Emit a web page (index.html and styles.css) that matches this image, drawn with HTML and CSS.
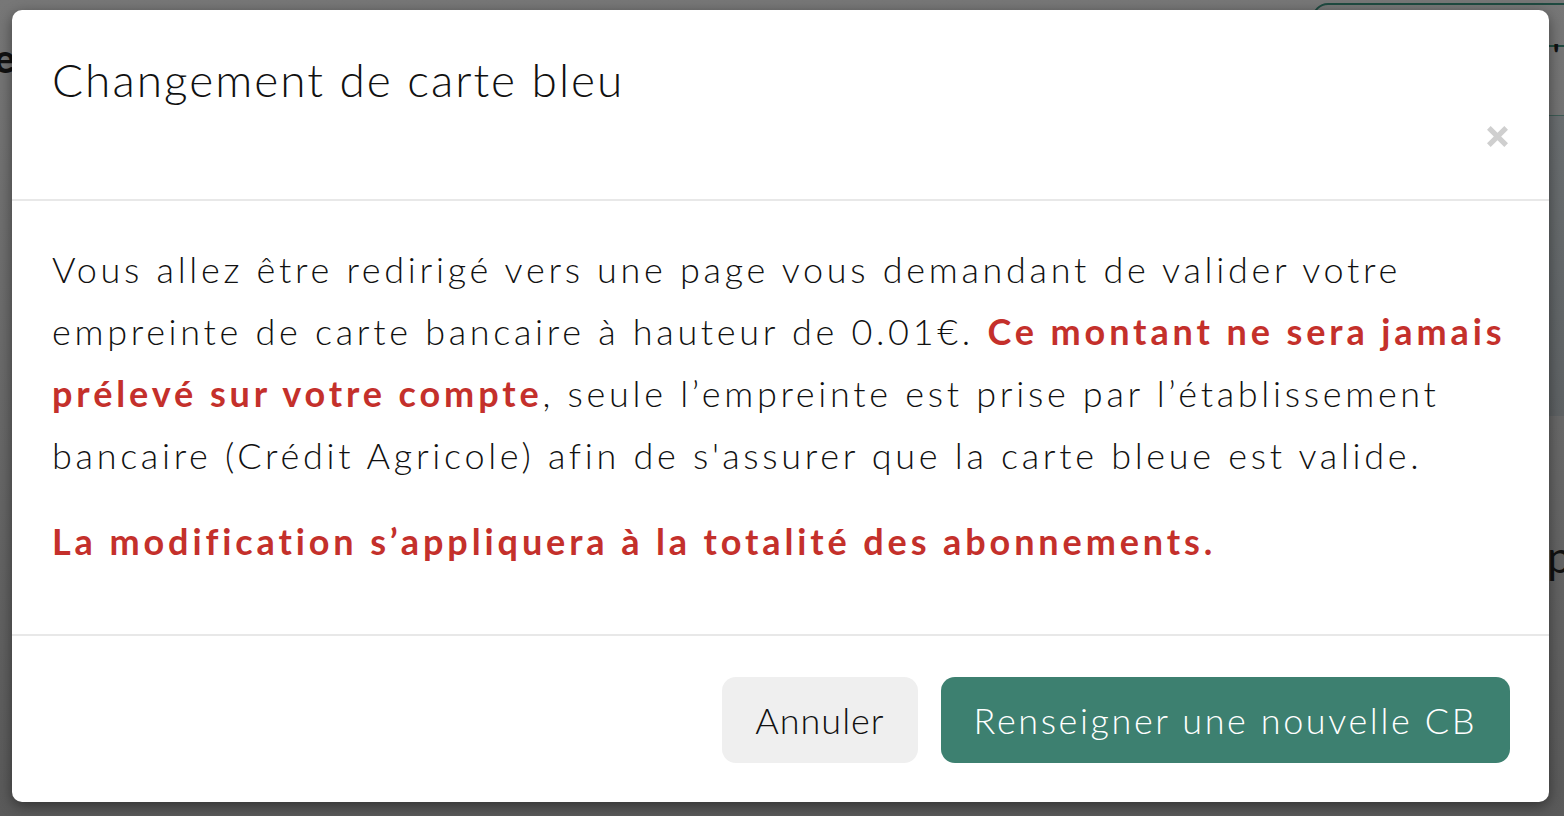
FILE: index.html
```html
<!DOCTYPE html>
<html lang="fr">
<head>
  <meta charset="UTF-8">
  <title>Changement de carte bleu</title>
  <link rel="stylesheet" href="styles.css">
</head>
<body>

  <!-- Page behind the backdrop -->
  <div class="page-behind">
    <span class="behind-letter">e</span>
    <span class="behind-btn"></span>
    <span class="behind-quote">'</span>
    <span class="behind-panel"></span>
    <span class="behind-p">p</span>
  </div>

  <!-- Modal -->
  <div class="modal">
    <header class="modal-header">
      <h4 class="modal-title">Changement de carte bleu</h4>
      <button class="close" type="button" aria-label="Fermer">
        <svg viewBox="0 0 20 20" width="21" height="21">
          <path d="M0 3.5 L3.5 0 L10 6.5 L16.5 0 L20 3.5 L13.5 10 L20 16.5 L16.5 20 L10 13.5 L3.5 20 L0 16.5 L6.5 10 Z" fill="#cfcfcf"/>
        </svg>
      </button>
    </header>

    <div class="modal-body">
      <p>Vous allez être redirigé vers une page vous demandant de valider votre empreinte de carte bancaire à hauteur de 0.01€. <strong class="warn">Ce montant ne sera jamais prélevé sur votre compte</strong>, seule l’empreinte est prise par l’établissement bancaire (Crédit Agricole) afin de s'assurer que la carte bleue est valide.</p>
      <p class="warn">La modification s’appliquera à la totalité des abonnements.</p>
    </div>

    <footer class="modal-footer">
      <button class="btn btn-light" type="button">Annuler</button>
      <button class="btn btn-green" type="button">Renseigner une nouvelle CB</button>
    </footer>
  </div>

</body>
</html>
```

FILE: styles.css
```css
/* Backdrop fills the window */
body {
  margin: 0;
  height: 816px;
  overflow: hidden;
  position: relative;
  background: linear-gradient(#777777, #5a5a5a);
  font-family: Lato, "Noto Sans", sans-serif;
}

/* Bits of the page showing around the modal */
.page-behind {
  position: absolute;
  inset: 0;
}
.behind-letter {
  position: absolute;
  left: -6px;
  top: 34px;
  font-size: 40px;
  font-weight: 900;
  color: #111;
}
.behind-btn {
  position: absolute;
  left: 1312px;
  top: 3px;
  width: 300px;
  height: 40px;
  border: 2px solid #1f4a40;
  border-radius: 16px;
}
.behind-quote {
  position: absolute;
  left: 1553px;
  top: 36px;
  font-size: 30px;
  font-weight: 900;
  color: #111;
}
.behind-panel {
  position: absolute;
  left: 1549px;
  top: 115px;
  width: 40px;
  height: 300px;
  border-top: 1px solid #3e5c55;
  background: linear-gradient(#6a6e70, #5e6264);
}
.behind-p {
  position: absolute;
  left: 1547px;
  top: 530px;
  font-size: 44px;
  color: #111;
}

/* Modal box */
.modal {
  position: absolute;
  left: 12px;
  top: 10px;
  width: 1537px;
  height: 792px;
  background: #ffffff;
  border-radius: 10px;
  box-shadow: 0 4px 14px rgba(0, 0, 0, 0.45);
  display: flex;
  flex-direction: column;
}

.modal-header {
  padding: 0 40px;
  border-bottom: 2px solid #e8e8e8;
  display: flex;
  flex-direction: column;
  box-sizing: border-box;
  height: 191px;
}
.modal-title {
  margin: 42px 0 0;
  font-size: 46px;
  font-weight: 300;
  letter-spacing: 2px;
  line-height: 56px;
  color: #111;
}
.close {
  align-self: flex-end;
  margin: 18px 1px 0 0;
  padding: 0;
  border: 0;
  background: none;
  display: flex;
}

.modal-body {
  padding: 37px 20px 0 40px;
  height: 435px;
  box-sizing: border-box;
  border-bottom: 2px solid #e8e8e8;
  font-size: 36px;
  font-weight: 300;
  letter-spacing: 3.7px;
  line-height: 62px;
  color: #111;
}
.modal-body p {
  margin: 0 0 24px;
}
.warn {
  color: #c4302b;
  font-weight: 700;
  letter-spacing: 3.9px;
}

.modal-footer {
  flex: 1;
  display: flex;
  justify-content: flex-end;
  align-items: flex-start;
  gap: 23px;
  padding: 41px 39px 0;
}
.btn {
  height: 86px;
  border: 0;
  border-radius: 14px;
  font-family: inherit;
  font-size: 36px;
  font-weight: 300;
  padding: 0 33px;
}
.btn-light {
  background: #efefef;
  color: #111;
  letter-spacing: 1px;
}
.btn-green {
  background: #3d8070;
  color: #ffffff;
  letter-spacing: 2.6px;
}
```
